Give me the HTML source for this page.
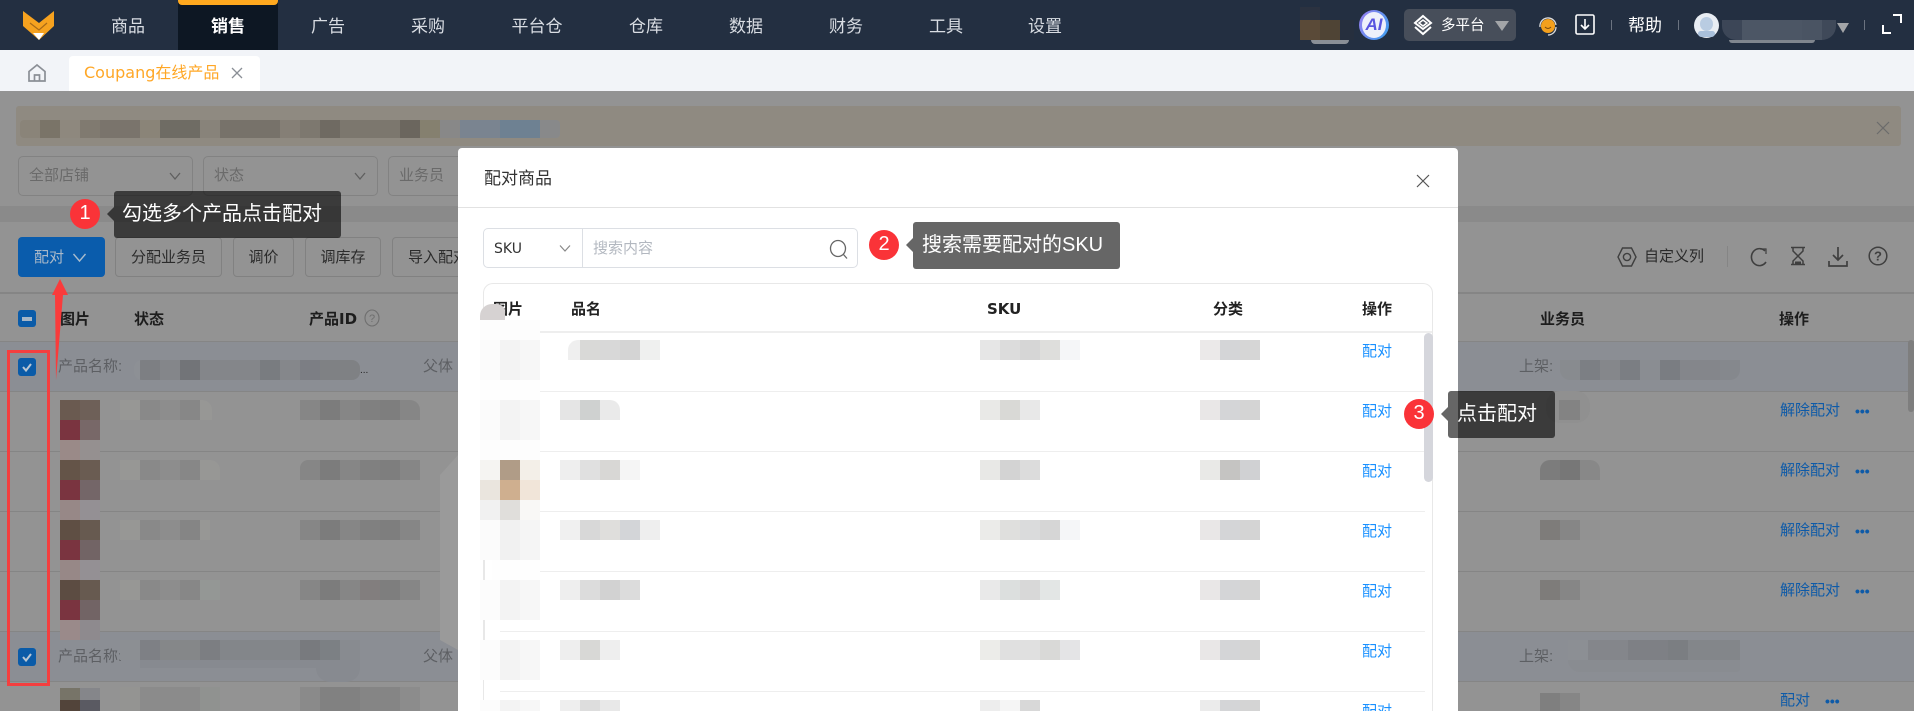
<!DOCTYPE html>
<html lang="zh"><head><meta charset="utf-8"><title>Coupang在线产品</title>
<style>
html,body{margin:0;padding:0;width:1914px;height:711px;overflow:hidden;background:#939393}
body{position:relative;font-family:"Liberation Sans","Noto Sans CJK SC",sans-serif;font-size:15px;color:#333}
div,span,svg{position:absolute;display:block}
.t{white-space:nowrap;line-height:20px;height:20px}
.n{top:17px;font-size:17px;color:#d9dde3;width:100px;text-align:center}
.f{font-family:"DejaVu Sans","Noto Sans CJK SC",sans-serif}
.h{font-weight:700;color:#1d1d1d;font-family:"DejaVu Sans","Noto Sans CJK SC",sans-serif;font-size:15px}
.m{font-weight:700;color:#222;font-family:"DejaVu Sans","Noto Sans CJK SC",sans-serif;font-size:15px}
.sel{top:156px;height:38px;border:1px solid #828282;border-radius:5px;width:173px}
.btn{top:237px;height:38px;border:1px solid #818181;border-radius:4px;line-height:40px;text-align:center;color:#2b2b2b;font-size:15px;white-space:nowrap;overflow:hidden}
.b{height:20px}
.l{background:#eee;height:1px}
.gl{background:#858585;height:1px;left:0;width:458px}
.gr{background:#858585;height:1px;left:1458px;width:456px}
.p{color:#1890ff;left:1362px;width:30px;text-align:center}
.u{color:#0d5aa8;left:1780px}
.dot{color:#0d5aa8;font-weight:700;font-size:14px;letter-spacing:0}
.oval{background:#fa3338;border-radius:50%;width:30px;height:30px;color:#fff;text-align:center;line-height:29px;font-size:20px}
.tip{background:rgba(0,0,0,.6);height:47px;border-radius:3px;color:#fff;font-size:20px;line-height:46px;white-space:nowrap}
.car{width:0;height:0;border:7px solid transparent;border-left-width:0;border-right:7px solid rgba(0,0,0,.6)}
.cb{left:18px;width:18px;height:18px;background:#0a5ba8;border-radius:3px}
</style></head><body>

<!-- top bar -->
<div style="left:0;top:0;width:1914px;height:50px;background:#232f41"></div>
<div style="left:178px;top:0;width:100px;height:50px;background:#0d1723"></div>
<div style="left:178px;top:0;width:100px;height:5px;background:#ffa91f;border-radius:0 0 4px 4px"></div>
<svg style="left:20px;top:8px" width="38" height="34" viewBox="0 0 38 34"><path d="M3 3 L19 15 L34 3 V18 L19 32 L3 18Z" fill="#f6a21f"/><path d="M10 15 L19 22 L27 15" fill="none" stroke="#a86a18" stroke-width="1.2"/><path d="M13 25 L24 25 L19 32Z" fill="#fff"/></svg>
<div class="t n" style="left:78px">商品</div>
<div class="t n" style="left:178px;color:#fff;font-weight:700">销售</div>
<div class="t n" style="left:278px">广告</div>
<div class="t n" style="left:378px">采购</div>
<div class="t n" style="left:487px">平台仓</div>
<div class="t n" style="left:596px">仓库</div>
<div class="t n" style="left:696px">数据</div>
<div class="t n" style="left:796px">财务</div>
<div class="t n" style="left:896px">工具</div>
<div class="t n" style="left:995px">设置</div>

<div style="left:1300px;top:7px;width:20px;height:13px;background:#2b3240"></div>
<div class="b" style="left:1300px;top:20px;width:40px;background:linear-gradient(to right,#5a4a38 0 20px,#4f4435 20px)"></div>
<div style="left:1340px;top:20px;width:14px;height:20px;background:#262f3e"></div>
<div style="left:1311px;top:40px;width:38px;height:4px;background:#8a8f96;border-radius:0 0 8px 8px"></div>
<div style="left:1359px;top:10px;width:30px;height:30px;border-radius:50%;background:linear-gradient(120deg,#9a7cf0,#3aa0f0);"></div>
<div style="left:1362px;top:12px;width:24px;height:26px;border-radius:50%;background:#eef0fb"></div>
<div class="t" style="left:1362px;top:15px;width:24px;text-align:center;color:#5a55e0;font-weight:700;font-style:italic;font-size:17px">AI</div>
<div style="left:1404px;top:9px;width:112px;height:32px;background:#474e5a;border-radius:5px"></div>
<svg style="left:1412px;top:14px" width="22" height="22" viewBox="0 0 22 22" fill="none" stroke="#fff" stroke-width="2"><path d="M11 2 L19 9 L11 15 L3 9Z"/><path d="M3 13 L11 20 L19 13"/><path d="M7 9 L11 6 L15 9 L11 12Z" stroke-width="1.5"/></svg>
<div class="t" style="left:1441px;top:16px;color:#fff;font-size:14.5px">多平台</div>
<div style="left:1495px;top:21px;width:0;height:0;border:7px solid transparent;border-top:10px solid #a3a5a8;border-bottom:0"></div>
<svg style="left:1537px;top:15px" width="22" height="22" viewBox="0 0 22 22"><circle cx="11" cy="11" r="7" fill="#f4a01c"/><path d="M3 12 A8 8 0 0 1 19 10" fill="none" stroke="#ddd" stroke-width="1.3"/><path d="M19 12 A8 8 0 0 1 11 20" fill="none" stroke="#ddd" stroke-width="1.3"/><path d="M8 12 Q11 15 14 12" fill="none" stroke="#7a4a10" stroke-width="1"/></svg>
<svg style="left:1575px;top:14px" width="20" height="21" viewBox="0 0 20 21" fill="none" stroke="#fff" stroke-width="1.6"><rect x="1" y="1" width="18" height="19" rx="1.5"/><path d="M10 5 V15 M6 11 L10 15 L14 11"/></svg>
<div style="left:1611px;top:20px;width:1px;height:10px;background:#6b7380"></div>
<div class="t" style="left:1628px;top:16px;color:#fff;font-size:17px">帮助</div>
<div style="left:1678px;top:20px;width:1px;height:10px;background:#6b7380"></div>
<div style="left:1694px;top:13px;width:25px;height:25px;border-radius:50%;background:#e8edf3"></div>
<div style="left:1700px;top:17px;width:13px;height:14px;border-radius:50%;background:#b9cce2"></div>
<div style="left:1698px;top:31px;width:17px;height:6px;border-radius:6px 6px 8px 8px;background:#a9c0db"></div>
<div style="left:1722px;top:20px;width:114px;height:20px;border-radius:0 0 14px 14px;background:linear-gradient(to right,#3c4657 0 20px,#4c5665 20px 80px,#4a5463 80px 100px,#3f4959 100px)"></div>
<div style="left:1729px;top:40px;width:86px;height:3px;background:#80868e;border-radius:0 0 8px 8px"></div>
<div style="left:1837px;top:23px;width:0;height:0;border:6px solid transparent;border-top:10px solid #a3a5a8;border-bottom:0"></div>
<div style="left:1864px;top:20px;width:1px;height:10px;background:#6b7380"></div>
<svg style="left:1881px;top:13px" width="22" height="22" viewBox="0 0 22 22" fill="none" stroke="#fff" stroke-width="2"><path d="M12 2 H20 V10"/><path d="M2 12 V20 H10"/></svg>

<!-- tab bar -->
<div style="left:0;top:50px;width:1914px;height:41px;background:#f2f4f8"></div>
<svg style="left:27px;top:63px" width="20" height="20" viewBox="0 0 20 20" fill="none" stroke="#8b8f96" stroke-width="1.7"><path d="M2 8.5 L10 2 L18 8.5 V18 H2Z"/><path d="M7.5 18 V12 H12.5 V18"/></svg>
<div style="left:69px;top:56px;width:191px;height:35px;background:#fff;border-radius:4px 4px 0 0"></div>
<div class="t f" style="left:84px;top:63px;font-size:16px;color:#ffa726;line-height:20px;font-family:'DejaVu Sans','Noto Sans CJK SC',sans-serif">Coupang在线产品</div>
<svg style="left:231px;top:67px" width="12" height="12" viewBox="0 0 12 12" stroke="#8a8f96" stroke-width="1.3"><path d="M1 1 L11 11 M11 1 L1 11"/></svg>

<!-- overlay page -->
<div style="left:16px;top:106px;width:1885px;height:40px;background:#8f8a81;border-radius:3px"></div>
<div class="b" style="left:20px;top:120px;width:540px;height:18px;background:linear-gradient(to right,#8a8479 0 20px,#7a7468 20px 40px,#8e887e 40px 60px,#807a70 60px 80px,#7a746c 80px 120px,#8a8478 120px 140px,#6f6c64 140px 180px,#88837a 180px 200px,#77726a 200px 260px,#857f76 260px 280px,#7d786f 280px 300px,#6f6a62 300px 320px,#7c776e 320px 380px,#6b665e 380px 400px,#85806f 400px 420px,#888 420px 440px,#7a8490 440px 480px,#6e8192 480px 520px,#88898a 520px);border-radius:4px"></div>
<svg style="left:1876px;top:121px" width="14" height="14" viewBox="0 0 14 14" stroke="#6b6b6b" stroke-width="1.2"><path d="M1 1 L13 13 M13 1 L1 13"/></svg>

<div class="sel" style="left:18px"></div>
<div class="t" style="left:29px;top:166px;color:#6a6a6a">全部店铺</div>
<svg style="left:169px;top:171px" width="12" height="10" viewBox="0 0 12 10" fill="none" stroke="#5f5f5f" stroke-width="1.3"><path d="M1 2 L6 8 L11 2"/></svg>
<div class="sel" style="left:203px"></div>
<div class="t" style="left:214px;top:166px;color:#6a6a6a">状态</div>
<svg style="left:354px;top:171px" width="12" height="10" viewBox="0 0 12 10" fill="none" stroke="#5f5f5f" stroke-width="1.3"><path d="M1 2 L6 8 L11 2"/></svg>
<div class="sel" style="left:388px"></div>
<div class="t" style="left:399px;top:166px;color:#6a6a6a">业务员</div>

<div style="left:0;top:206px;width:1914px;height:16px;background:#8a8a8a"></div>

<!-- toolbar -->
<div class="btn" style="left:18px;width:87px;height:40px;border:0;background:#0a5cac;color:#aab9c9;text-align:left;text-indent:16px;line-height:42px">配对</div>
<svg style="left:72px;top:252px" width="15" height="12" viewBox="0 0 15 12" fill="none" stroke="#a9bccd" stroke-width="1.4"><path d="M1.5 2 L7.5 9 L13.5 2"/></svg>
<div class="btn" style="left:115px;width:105px">分配业务员</div>
<div class="btn" style="left:233px;width:59px">调价</div>
<div class="btn" style="left:305px;width:74px">调库存</div>
<div class="btn" style="left:392px;width:90px">导入配对</div>

<svg style="left:1617px;top:246px" width="20" height="22" viewBox="0 0 20 22" fill="none" stroke="#3f3f3f" stroke-width="1.4"><path d="M5.5 2 H14.5 L19 11 L14.5 20 H5.5 L1 11Z"/><circle cx="10" cy="11" r="3.6"/></svg>
<div class="t" style="left:1644px;top:247px;color:#2a2a2a;font-size:15px">自定义列</div>
<div style="left:1727px;top:246px;width:1px;height:21px;background:#858585"></div>
<svg style="left:1748px;top:246px" width="20" height="21" viewBox="0 0 20 21" fill="none" stroke="#3f3f3f" stroke-width="1.6"><path d="M17 5 A8 8.5 0 1 0 18 16"/><path d="M12 3 H18 V8" stroke-width="1.2"/></svg>
<svg style="left:1789px;top:246px" width="18" height="20" viewBox="0 0 18 20" fill="none" stroke="#3f3f3f" stroke-width="1.5"><path d="M2 1.500 H16 M2 18.500 H16 M4 1.500 V5 L9 10 L14 5 V1.500 M4 18.500 V15 L9 10 L14 15 V18.500"/><path d="M6 15.500 H12 V18 H6Z" fill="#3f3f3f" stroke="none"/></svg>
<svg style="left:1828px;top:246px" width="20" height="21" viewBox="0 0 20 21" fill="none" stroke="#3f3f3f" stroke-width="1.7"><path d="M10 1 V14 M5 9 L10 14 L15 9 M1 15 V20 H19 V15"/></svg>
<svg style="left:1868px;top:246px" width="20" height="20" viewBox="0 0 20 20" fill="none" stroke="#3f3f3f" stroke-width="1.5"><circle cx="10" cy="10" r="8.800"/><text x="10" y="14.500" fill="#3f3f3f" stroke="none" font-size="13" font-weight="700" text-anchor="middle" font-family="Liberation Sans">?</text></svg>

<!-- main table -->
<div class="gl" style="top:292px;height:2px"></div><div class="gr" style="top:292px;height:2px"></div>
<div class="cb" style="top:310px;height:17px"></div>
<div style="left:22px;top:317px;width:10px;height:4px;background:#a6b6c6"></div>
<div class="t h" style="left:60px;top:309px">图片</div>
<div class="t h" style="left:134px;top:309px">状态</div>
<div class="t h" style="left:309px;top:309px">产品ID</div>
<svg style="left:364px;top:309px" width="16" height="18" viewBox="0 0 16 18" fill="none" stroke="#6f6f6f" stroke-width="1.1"><ellipse cx="8" cy="9" rx="7" ry="8"/><text x="8" y="13" fill="#6f6f6f" stroke="none" font-size="11" text-anchor="middle" font-family="Liberation Sans">?</text></svg>
<div class="t h" style="left:1540px;top:309px">业务员</div>
<div class="t h" style="left:1779px;top:309px">操作</div>

<div style="left:0;top:341px;width:458px;height:51px;background:#8b8e94"></div>
<div style="left:1458px;top:341px;width:456px;height:51px;background:#8b8e94"></div>
<div style="left:0;top:631px;width:458px;height:51px;background:#8b8e94"></div>
<div style="left:1458px;top:631px;width:456px;height:51px;background:#8b8e94"></div>
<div class="gl" style="top:341px"></div><div class="gr" style="top:341px"></div>
<div class="gl" style="top:391px"></div><div class="gr" style="top:391px"></div>
<div class="gl" style="top:451px"></div><div class="gr" style="top:451px"></div>
<div class="gl" style="top:511px"></div><div class="gr" style="top:511px"></div>
<div class="gl" style="top:571px"></div><div class="gr" style="top:571px"></div>
<div class="gl" style="top:631px"></div><div class="gr" style="top:631px"></div>
<div class="gl" style="top:681px"></div><div class="gr" style="top:681px"></div>

<div class="cb" style="top:358px"></div>
<svg style="left:18px;top:358px" width="18" height="18" viewBox="0 0 18 18" fill="none" stroke="#b9c6d3" stroke-width="2"><path d="M5 9 L8 12.500 L13 6"/></svg>
<div class="cb" style="top:648px"></div>
<svg style="left:18px;top:648px" width="18" height="18" viewBox="0 0 18 18" fill="none" stroke="#b9c6d3" stroke-width="2"><path d="M5 9 L8 12.500 L13 6"/></svg>

<div class="t" style="left:58px;top:357px;color:#5d5f63">产品名称:</div>
<div class="b" style="left:134px;top:360px;width:226px;border-radius:8px;background:linear-gradient(to right,#8d9095 0 6px,#7d7f83 6px 26px,#84868a 26px 46px,#727478 46px 66px,#84868a 66px 126px,#797c80 126px 146px,#85878b 146px 166px,#7c7e84 166px 186px,#7f8184 186px)"></div>
<div class="t" style="left:360px;top:361px;color:#222;font-size:10px">...</div>
<div class="t" style="left:423px;top:357px;color:#5d5f63">父体</div>
<div class="t" style="left:58px;top:647px;color:#5d5f63">产品名称:</div>
<div class="b" style="left:120px;top:640px;width:240px;background:linear-gradient(to right,#8c8f93 0 20px,#7e8085 20px 40px,#858789 40px 80px,#7c7e82 80px 100px,#83868a 100px 180px,#787a7e 180px 200px,#7c8084 200px 220px,#888b90 220px)"></div>
<div style="left:140px;top:660px;width:220px;height:8px;background:#878a90"></div>
<div style="left:316px;top:668px;width:44px;height:14px;border-radius:0 0 22px 22px;background:#878a90"></div>
<div class="t" style="left:423px;top:647px;color:#5d5f63">父体</div>

<div class="t" style="left:1519px;top:357px;color:#5d5f63">上架:</div>
<div class="b" style="left:1560px;top:360px;width:180px;border-radius:0 0 10px 10px;background:linear-gradient(to right,#888b8f 0 20px,#7c7f84 20px 40px,#85878b 40px 60px,#7b7e83 60px 80px,#8a8d92 80px 100px,#7a7d82 100px 120px,#84868b 120px 160px,#85888d 160px)"></div>
<div class="t" style="left:1519px;top:647px;color:#5d5f63">上架:</div>
<div class="b" style="left:1568px;top:640px;width:172px;background:linear-gradient(to right,#8c8f94 0 20px,#84868b 20px 60px,#7e8085 60px 100px,#7b7e82 100px 120px,#83868a 120px)"></div>
<div style="left:1568px;top:660px;width:172px;height:12px;border-radius:0 0 6px 20px;background:#898c91"></div>

<!-- rows left -->
<div style="left:60px;top:400px;width:40px;height:60px;background:linear-gradient(to right,#6a5a50 0 20px,#6e6058 20px) 0 0/40px 20px no-repeat,linear-gradient(to right,#7a3440 0 20px,#786868 20px) 0 20px/40px 20px no-repeat,linear-gradient(to right,#9a8a88 0 20px,#959090 20px) 0 40px/40px 20px no-repeat"></div>
<div style="left:60px;top:460px;width:40px;height:60px;background:linear-gradient(to right,#645448 0 20px,#6a5c52 20px) 0 0/40px 20px no-repeat,linear-gradient(to right,#7a3440 0 20px,#746668 20px) 0 20px/40px 20px no-repeat,linear-gradient(to right,#978887 0 20px,#949094 20px) 0 40px/40px 20px no-repeat"></div>
<div style="left:60px;top:520px;width:40px;height:60px;background:linear-gradient(to right,#5f4f44 0 20px,#675a50 20px) 0 0/40px 20px no-repeat,linear-gradient(to right,#7a3440 0 20px,#726465 20px) 0 20px/40px 20px no-repeat,linear-gradient(to right,#978887 0 20px,#949094 20px) 0 40px/40px 20px no-repeat"></div>
<div style="left:60px;top:580px;width:40px;height:60px;background:linear-gradient(to right,#5c4c42 0 20px,#675a50 20px) 0 0/40px 20px no-repeat,linear-gradient(to right,#7a3440 0 20px,#726465 20px) 0 20px/40px 20px no-repeat,linear-gradient(to right,#9a8a8a 0 20px,#8e8a8e 20px) 0 40px/40px 20px no-repeat"></div>
<div style="left:60px;top:688px;width:40px;height:12px;background:linear-gradient(to right,#777468 0 20px,#85868a 20px)"></div>
<div style="left:60px;top:700px;width:40px;height:11px;background:linear-gradient(to right,#52443a 0 20px,#5a5a62 20px)"></div>

<div class="b" style="left:120px;top:400px;width:92px;border-radius:0 10px 0 0;background:linear-gradient(to right,#979795 0 20px,#898989 20px 40px,#8d8d8d 40px 60px,#878787 60px 80px,#979795 80px)"></div>
<div class="b" style="left:120px;top:460px;width:100px;border-radius:0 10px 0 0;background:linear-gradient(to right,#979795 0 20px,#898989 20px 40px,#8d8d8d 40px 60px,#878787 60px 80px,#979795 80px)"></div>
<div class="b" style="left:120px;top:520px;width:90px;background:linear-gradient(to right,#979795 0 20px,#898989 20px 40px,#8d8d8d 40px 60px,#858585 60px 80px,#979795 80px)"></div>
<div class="b" style="left:120px;top:580px;width:100px;background:linear-gradient(to right,#979795 0 20px,#898989 20px 40px,#8d8d8d 40px 60px,#878787 60px 80px,#949795 80px)"></div>
<div class="b" style="left:120px;top:687px;width:100px;height:24px;background:linear-gradient(to right,#949492 0 20px,#8b8b8b 20px 80px,#909290 80px)"></div>
<div class="b" style="left:300px;top:400px;width:120px;border-radius:0 10px 0 0;background:linear-gradient(to right,#868686 0 20px,#7c7c7c 20px 40px,#868686 40px 60px,#808080 60px 80px,#7e7e7e 80px 100px,#868686 100px)"></div>
<div class="b" style="left:300px;top:460px;width:120px;border-radius:8px 0 0 0;background:linear-gradient(to right,#868686 0 20px,#7c7c7c 20px 40px,#868686 40px 60px,#808080 60px 80px,#7e7e7e 80px 100px,#868686 100px)"></div>
<div class="b" style="left:300px;top:520px;width:120px;background:linear-gradient(to right,#868686 0 20px,#7c7c7c 20px 40px,#868686 40px 60px,#808080 60px 80px,#7e7e7e 80px 100px,#868686 100px)"></div>
<div class="b" style="left:300px;top:580px;width:120px;background:linear-gradient(to right,#868686 0 20px,#7c7c7c 20px 40px,#868686 40px 60px,#827e7e 60px 80px,#7e7e7e 80px 100px,#868686 100px)"></div>
<div class="b" style="left:300px;top:687px;width:120px;height:24px;background:linear-gradient(to right,#8a8a8a 0 20px,#818181 20px 60px,#858585 60px 100px,#8c8c8c 100px)"></div>
<svg style="left:440px;top:450px" width="18" height="200" viewBox="0 0 18 200"><path d="M18 5 L0 25 V190 L18 200Z" fill="#9a9a9a"/></svg>

<!-- rows right -->
<div style="left:1546px;top:391px;width:44px;height:32px;border-radius:14px;background:#909090"></div>
<div class="b" style="left:1559px;top:400px;width:21px;background:#838383"></div>
<div class="b" style="left:1540px;top:460px;width:60px;border-radius:10px 10px 0 0;background:linear-gradient(to right,#7c7c7c 0 20px,#777 20px 40px,#888 40px)"></div>
<div class="b" style="left:1540px;top:520px;width:60px;background:linear-gradient(to right,#7e7c7a 0 20px,#868686 20px 40px,#929292 40px)"></div>
<div class="b" style="left:1540px;top:580px;width:60px;background:linear-gradient(to right,#7e7c7a 0 20px,#868686 20px 40px,#929292 40px)"></div>
<div class="b" style="left:1540px;top:693px;width:40px;height:18px;background:linear-gradient(to right,#7f7f7f 0 20px,#868686 20px)"></div>
<div class="t u" style="top:401px">解除配对</div><div class="t dot" style="left:1855px;top:401px">•••</div>
<div class="t u" style="top:461px">解除配对</div><div class="t dot" style="left:1855px;top:461px">•••</div>
<div class="t u" style="top:521px">解除配对</div><div class="t dot" style="left:1855px;top:521px">•••</div>
<div class="t u" style="top:581px">解除配对</div><div class="t dot" style="left:1855px;top:581px">•••</div>
<div class="t u" style="top:691px;height:20px">配对</div><div class="t dot" style="left:1825px;top:691px">•••</div>
<div style="left:1908px;top:340px;width:6px;height:72px;background:#7e7e7e;border-radius:3px"></div>

<!-- modal -->
<div style="left:458px;top:148px;width:1000px;height:563px;background:#fff;border-radius:4px 4px 0 0"></div>
<div class="t" style="left:484px;top:169px;font-size:17px;color:#333">配对商品</div>
<svg style="left:1416px;top:174px" width="14" height="14" viewBox="0 0 14 14" stroke="#555" stroke-width="1.200"><path d="M1 1 L13 13 M13 1 L1 13"/></svg>
<div style="left:458px;top:207px;width:1000px;height:1px;background:#e2e2e2"></div>

<div style="left:483px;top:228px;width:373px;height:38px;border:1px solid #dcdfe4;border-radius:5px"></div>
<div style="left:582px;top:229px;width:1px;height:38px;background:#dcdfe4"></div>
<div class="t" style="left:494px;top:239px;color:#333;font-family:'DejaVu Sans',sans-serif;font-size:14px">SKU</div>
<svg style="left:559px;top:244px" width="12" height="9" viewBox="0 0 12 9" fill="none" stroke="#888" stroke-width="1.200"><path d="M1 1.500 L6 7 L11 1.500"/></svg>
<div class="t" style="left:593px;top:239px;color:#b3b8c0">搜索内容</div>
<svg style="left:829px;top:239px" width="20" height="21" viewBox="0 0 20 21" fill="none" stroke="#666" stroke-width="1.300"><ellipse cx="9" cy="9.500" rx="7.500" ry="8"/><path d="M14 15 L18 19.500"/></svg>

<div style="left:483px;top:283px;width:948px;height:440px;border:1px solid #e8e8e8;border-radius:10px 10px 0 0;border-bottom:0"></div>
<div class="t m" style="left:493px;top:299px">图片</div>
<div class="t m" style="left:571px;top:299px">品名</div>
<div class="t m" style="left:987px;top:299px">SKU</div>
<div class="t m" style="left:1213px;top:299px">分类</div>
<div class="t m" style="left:1362px;top:299px">操作</div>
<div class="l" style="left:484px;top:331px;width:948px;height:2px"></div>
<div class="l" style="left:484px;top:391px;width:941px"></div>
<div class="l" style="left:484px;top:451px;width:941px"></div>
<div class="l" style="left:500px;top:511px;width:925px"></div>
<div class="l" style="left:500px;top:571px;width:925px"></div>
<div class="l" style="left:500px;top:631px;width:925px"></div>
<div class="l" style="left:500px;top:691px;width:925px"></div>

<div style="left:480px;top:304px;width:25px;height:16px;background:#d6d2d2;border-radius:12px 8px 0 0"></div>
<div style="left:480px;top:320px;width:60px;height:24px;background:#fdfdfd"></div>
<div style="left:480px;top:340px;width:60px;height:40px;background:linear-gradient(to right,#fbfbfb 0 20px,#f3f3f3 20px 40px,#f7f7f7 40px)"></div>
<div style="left:480px;top:380px;width:60px;height:20px;background:#fefefe"></div>
<div style="left:480px;top:400px;width:60px;height:40px;background:linear-gradient(to right,#fbfbfb 0 20px,#f3f3f3 20px 40px,#f7f7f7 40px)"></div>
<div style="left:480px;top:440px;width:60px;height:20px;background:#fdfdfd"></div>
<div style="left:480px;top:460px;width:60px;height:20px;background:linear-gradient(to right,#f5f4f2 0 20px,#b09c87 20px 40px,#f3efe8 40px)"></div>
<div style="left:480px;top:480px;width:60px;height:20px;background:linear-gradient(to right,#eae5de 0 20px,#cfaf8f 20px 40px,#f1e5d9 40px)"></div>
<div style="left:480px;top:500px;width:60px;height:20px;background:linear-gradient(to right,#f1f1f1 0 20px,#e0dedb 20px 40px,#f9f8f6 40px)"></div>
<div style="left:480px;top:520px;width:60px;height:40px;background:linear-gradient(to right,#fbfbfb 0 20px,#f1f1f1 20px 40px,#f5f5f5 40px)"></div>
<div style="left:484px;top:560px;width:1px;height:120px;background:#e8e8e8"></div>
<div style="left:492px;top:560px;width:48px;height:20px;background:#fefefe"></div>
<div style="left:480px;top:580px;width:60px;height:40px;background:linear-gradient(to right,#fcfcfc 0 20px,#f3f3f3 20px 40px,#f7f7f7 40px)"></div>
<div style="left:480px;top:640px;width:60px;height:40px;background:linear-gradient(to right,#fcfcfc 0 20px,#f3f3f3 20px 40px,#f7f7f7 40px)"></div>
<div style="left:480px;top:700px;width:60px;height:11px;background:linear-gradient(to right,#fcfcfc 0 20px,#f3f3f3 20px 40px,#f7f7f7 40px)"></div>

<div class="b" style="left:568px;top:340px;width:92px;border-radius:10px 0 0 0;background:linear-gradient(to right,#efefef 0 12px,#d9d9d7 12px 32px,#d8d8d8 32px 52px,#d4d4d4 52px 72px,#eff0ef 72px)"></div>
<div class="b" style="left:980px;top:340px;width:100px;background:linear-gradient(to right,#e6e6e6 0 20px,#dcdcdc 20px 40px,#d6d6d6 40px 60px,#dededc 60px 80px,#f5f6f8 80px)"></div>
<div class="b" style="left:1200px;top:340px;width:60px;background:linear-gradient(to right,#ebe9e9 0 20px,#d4d5d7 20px 40px,#d6d6d6 40px)"></div>

<div class="b" style="left:560px;top:400px;width:60px;border-radius:0 10px 0 0;background:linear-gradient(to right,#e5e5e5 0 20px,#cfd1d0 20px 40px,#eaeaea 40px)"></div>
<div class="b" style="left:980px;top:400px;width:60px;background:linear-gradient(to right,#e9e9e7 0 20px,#d9d9d6 20px 40px,#e8e8e8 40px)"></div>
<div class="b" style="left:1200px;top:400px;width:60px;background:linear-gradient(to right,#e9e7e7 0 20px,#d4d5d7 20px 40px,#d4d4d4 40px)"></div>

<div class="b" style="left:560px;top:460px;width:80px;background:linear-gradient(to right,#eee 0 20px,#e0e0e0 20px 40px,#d8d7d5 40px 60px,#f5f5f5 60px)"></div>
<div class="b" style="left:980px;top:460px;width:60px;background:linear-gradient(to right,#e8e8e6 0 20px,#d3d3d3 20px 40px,#dcdcdc 40px)"></div>
<div class="b" style="left:1200px;top:460px;width:60px;background:linear-gradient(to right,#e9e9e7 0 20px,#c5c4c2 20px 40px,#d0d1d3 40px)"></div>

<div class="b" style="left:560px;top:520px;width:100px;background:linear-gradient(to right,#f0f0f0 0 20px,#d8d8d8 20px 40px,#dfdedc 40px 60px,#d3d5d8 60px 80px,#eee 80px)"></div>
<div class="b" style="left:980px;top:520px;width:100px;background:linear-gradient(to right,#ebebe9 0 20px,#dfdfdd 20px 40px,#dadbdc 40px 60px,#d6d6d6 60px 80px,#f5f6f8 80px)"></div>
<div class="b" style="left:1200px;top:520px;width:60px;background:linear-gradient(to right,#e9e7e7 0 20px,#d4d5d7 20px 40px,#d4d4d4 40px)"></div>

<div class="b" style="left:560px;top:580px;width:80px;background:linear-gradient(to right,#eee 0 20px,#dcdcdc 20px 40px,#d2d2d2 40px 60px,#dcdcdc 60px)"></div>
<div class="b" style="left:980px;top:580px;width:80px;background:linear-gradient(to right,#e9e9e9 0 20px,#dcdfde 20px 40px,#d8d8d8 40px 60px,#e3e6e5 60px)"></div>
<div class="b" style="left:1200px;top:580px;width:60px;background:linear-gradient(to right,#e9e7e7 0 20px,#d4d5d7 20px 40px,#d4d4d4 40px)"></div>

<div class="b" style="left:560px;top:640px;width:60px;background:linear-gradient(to right,#eee 0 20px,#d8d8d6 20px 40px,#eee 40px)"></div>
<div class="b" style="left:980px;top:640px;width:100px;background:linear-gradient(to right,#ecece9 0 20px,#e0e0e0 20px 60px,#d9d9d7 60px 80px,#e4e4e6 80px)"></div>
<div class="b" style="left:1200px;top:640px;width:60px;background:linear-gradient(to right,#e9e7e7 0 20px,#d4d5d7 20px 40px,#d4d4d4 40px)"></div>

<div class="b" style="left:560px;top:700px;width:60px;height:11px;background:linear-gradient(to right,#eee 0 20px,#ddd 20px 40px,#e8e8e8 40px)"></div>
<div class="b" style="left:980px;top:700px;width:60px;height:11px;background:linear-gradient(to right,#ededed 0 20px,#f5f5f5 20px 40px,#d8d8d8 40px)"></div>
<div class="b" style="left:1200px;top:700px;width:60px;height:11px;background:linear-gradient(to right,#ebebeb 0 20px,#d4d5d7 20px 40px,#d4d4d4 40px)"></div>

<div class="t p" style="top:342px">配对</div>
<div class="t p" style="top:402px">配对</div>
<div class="t p" style="top:462px">配对</div>
<div class="t p" style="top:522px">配对</div>
<div class="t p" style="top:582px">配对</div>
<div class="t p" style="top:642px">配对</div>
<div class="t p" style="top:702px;height:9px;overflow:hidden">配对</div>

<div style="left:1424px;top:333px;width:9px;height:149px;background:#d5d6dc;border-radius:5px"></div>

<!-- annotations -->
<svg style="left:0;top:270px" width="120" height="120" viewBox="0 0 120 120"><path d="M60 9 L68 25 L63 25 L56 110 L55 25 L52 25Z" fill="#fa3b3b"/></svg>
<div style="left:7px;top:350px;width:37px;height:330px;border:3px solid #f43f3f"></div>

<div class="oval" style="left:70px;top:199px">1</div>
<div class="car" style="left:107px;top:207px"></div>
<div class="tip" style="left:114px;top:191px;width:227px;text-indent:8px">勾选多个产品点击配对</div>

<div class="oval" style="left:869px;top:230px">2</div>
<div class="car" style="left:906px;top:238px"></div>
<div class="tip" style="left:913px;top:222px;width:207px;text-indent:9px">搜索需要配对的SKU</div>

<div class="oval" style="left:1404px;top:399px">3</div>
<div class="car" style="left:1441px;top:407px"></div>
<div class="tip" style="left:1448px;top:391px;width:107px;text-indent:9px">点击配对</div>
</body></html>
